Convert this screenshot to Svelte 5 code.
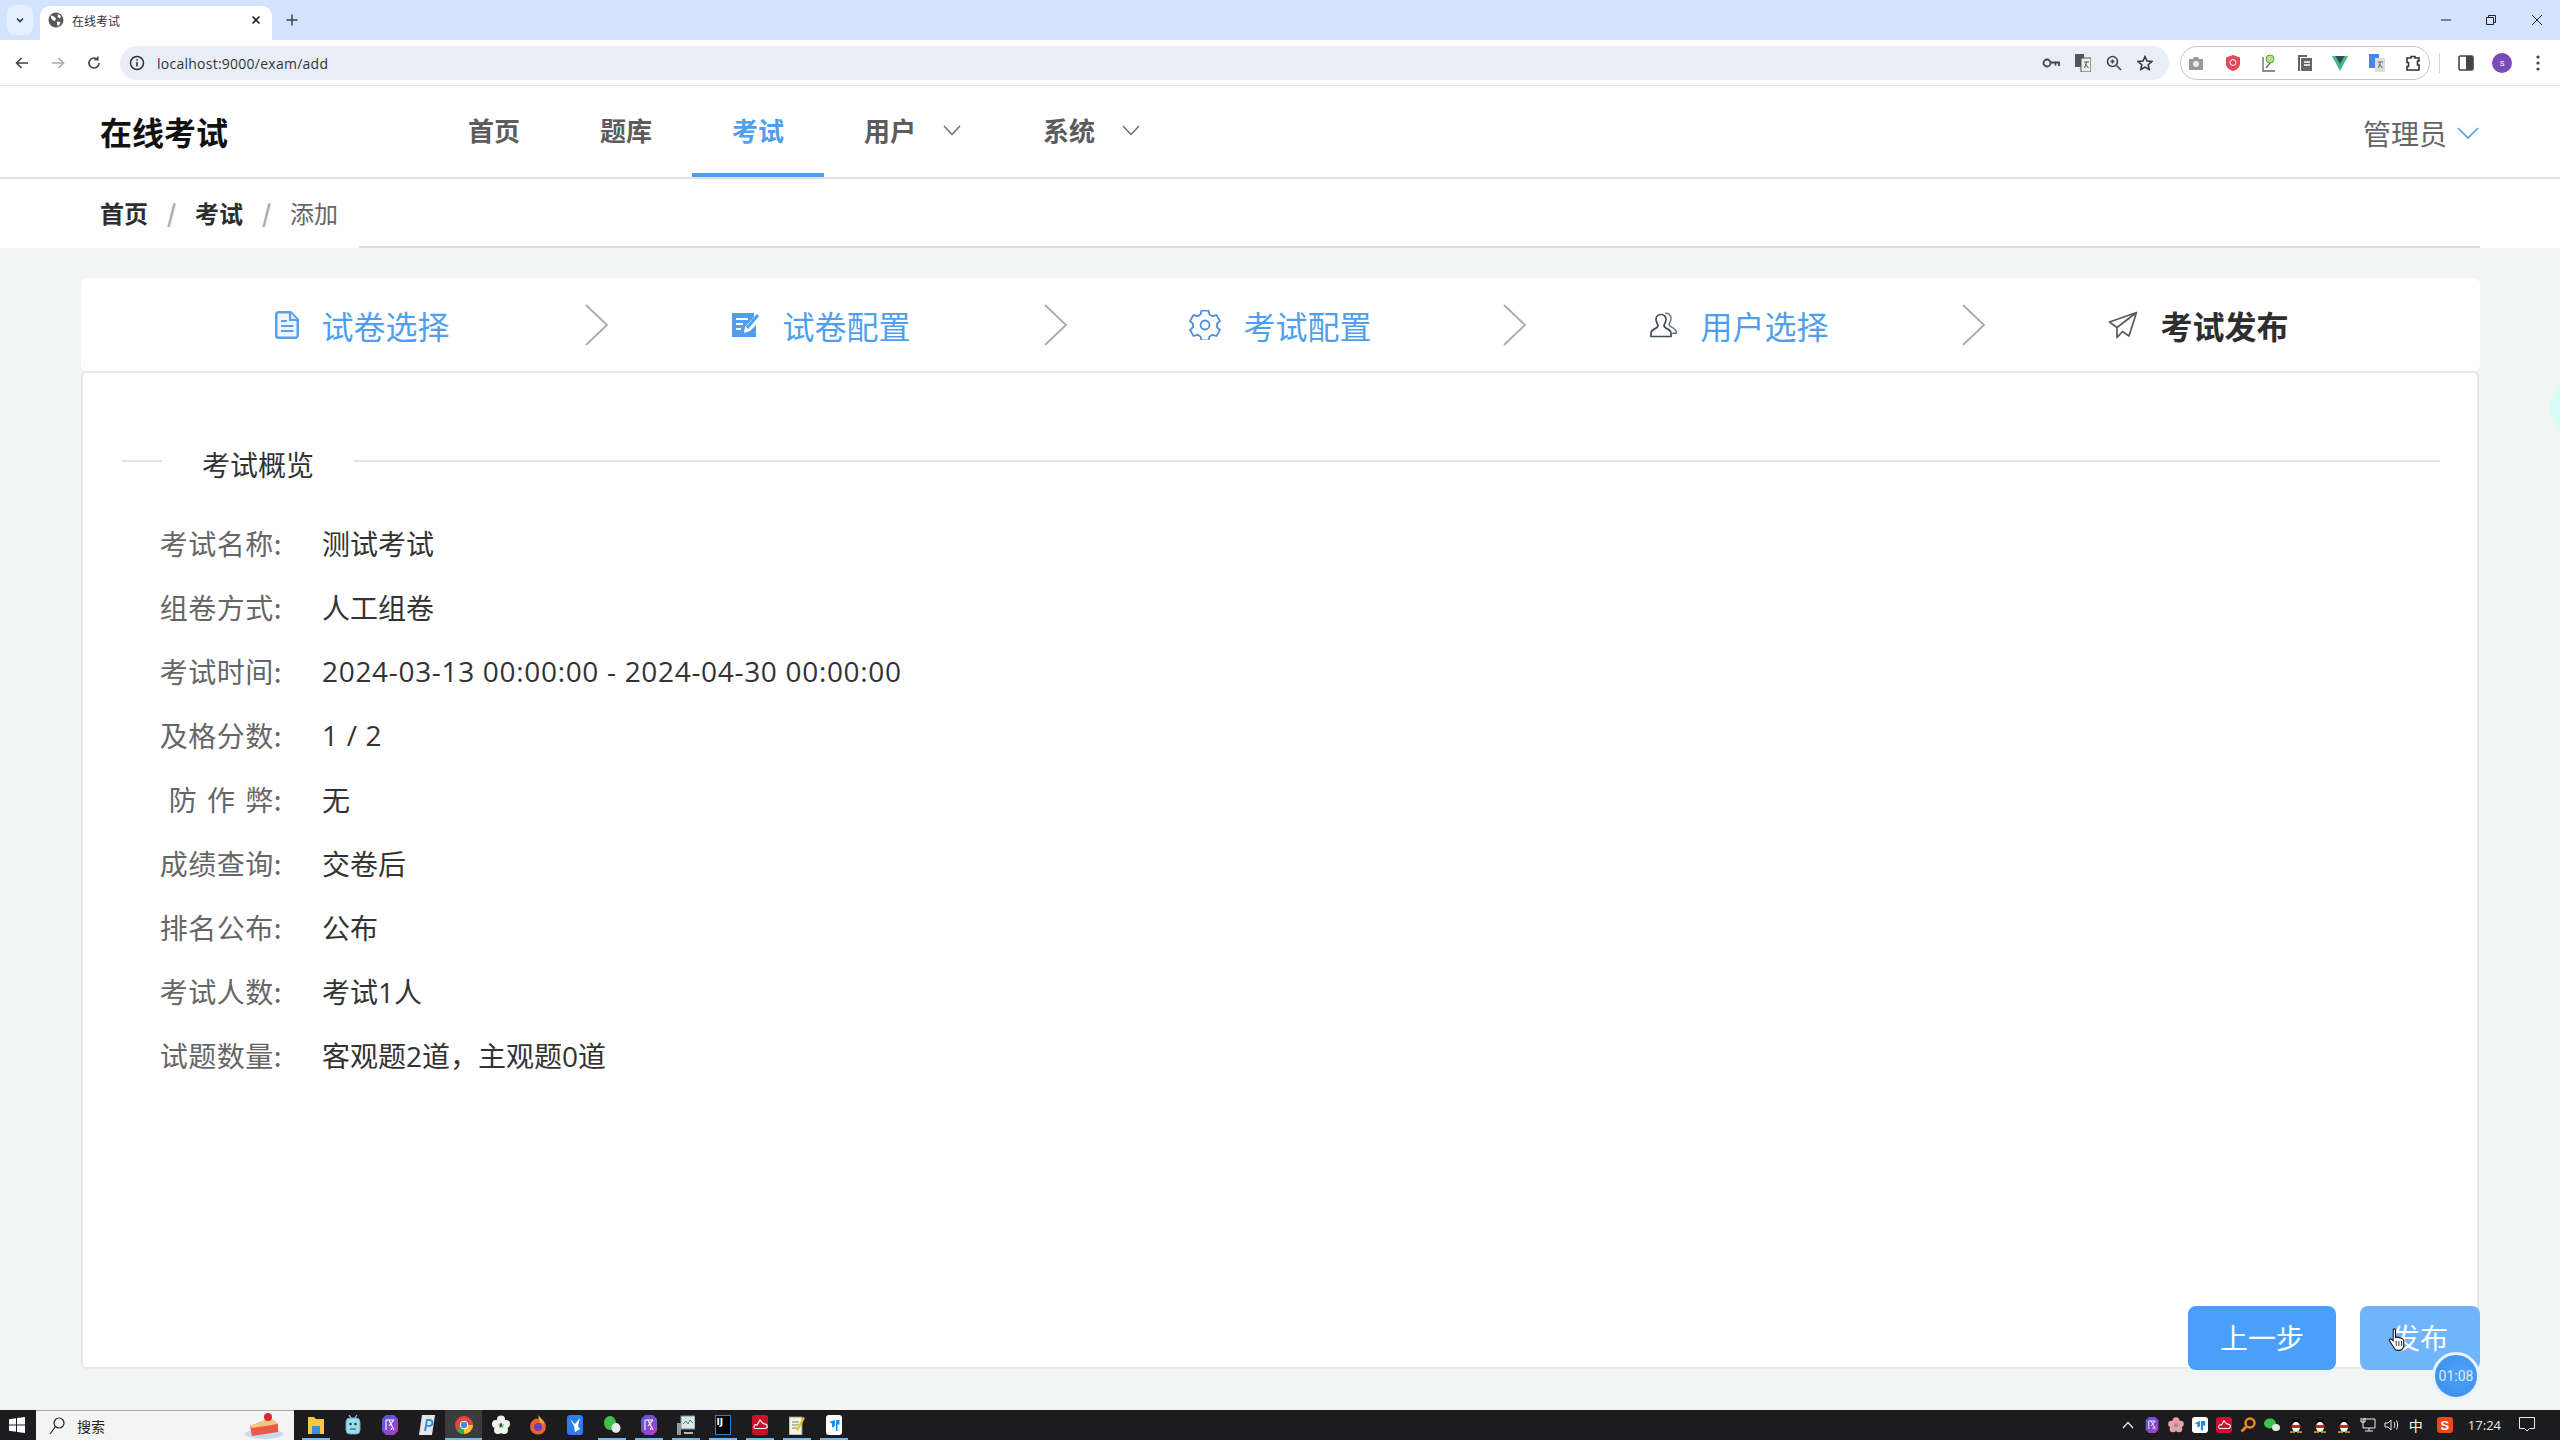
<script>
  const steps = [
    { label: '试卷选择', icon: 'doc' },
    { label: '试卷配置', icon: 'edit' },
    { label: '考试配置', icon: 'gear' },
    { label: '用户选择', icon: 'user' },
    { label: '考试发布', icon: 'send', current: true }
  ];
  const rows = [
    ['考试名称:', '测试考试'],
    ['组卷方式:', '人工组卷'],
    ['考试时间:', '2024-03-13 00:00:00 - 2024-04-30 00:00:00'],
    ['及格分数:', '1 / 2'],
    ['防 作 弊:', '无'],
    ['成绩查询:', '交卷后'],
    ['排名公布:', '公布'],
    ['考试人数:', '考试1人'],
    ['试题数量:', '客观题2道\uFF0C主观题0道']
  ];
  const pinned = [
    { under: true, k: 'folder' },
    { under: false, k: 'robot' },
    { under: false, k: 'hex' },
    { under: false, k: 'p' },
    { under: true, k: 'chrome' },
    { under: false, k: 'flower' },
    { under: false, k: 'fox' },
    { under: false, k: 'bird' },
    { under: true, k: 'chat' },
    { under: true, k: 'hex' },
    { under: true, k: 'mon' },
    { under: true, k: 'ij' },
    { under: true, k: 'cloud' },
    { under: true, k: 'note' },
    { under: true, k: 'tile' }
  ];
</script>

{#snippet hexIcon(w, h)}
  <svg width={w} height={h} viewBox="0 0 16 20">
    <defs><linearGradient id="hexg" x1="0" y1="0" x2="1" y2="1"><stop offset="0" stop-color="#4a5ce0"/><stop offset="1" stop-color="#b83cc0"/></linearGradient></defs>
    <path d="M4 0h8l4 4v12l-4 4H4l-4-4V4z" fill="url(#hexg)"/>
    <path d="M4 5v10M7 5l5 10M12 5L7 11M9.500 13v2M4 5h8" stroke="#fff" stroke-width="1.100" fill="none"/>
  </svg>
{/snippet}

<div class="screen">
  <div class="tabstrip">
    <div class="tabsearch"><svg width="12" height="12" viewBox="0 0 12 12"><path d="M3 4.500l3 3 3-3" fill="none" stroke="#333" stroke-width="1.600"/></svg></div>
    <div class="tab">
      <svg width="16" height="16" viewBox="0 0 16 16"><circle cx="8" cy="8" r="7.500" fill="#55585c"/><path d="M3 3.500l3 1 2 2-1 2.500-2-.5-2-2.500zM10 2l3 2-1 2.500-2.500-1.500zM9 9.500l3.500.5-1.500 4-2-1z" fill="#fff"/></svg>
      <span class="tabtitle">在线考试</span>
      <svg class="tabclose" width="12" height="12" viewBox="0 0 12 12"><path d="M2.500 2.500l7 7M9.500 2.500l-7 7" stroke="#222" stroke-width="1.600"/></svg>
    </div>
    <svg class="newtab" width="14" height="14" viewBox="0 0 14 14"><path d="M7 1.500v11M1.500 7h11" stroke="#444" stroke-width="1.500"/></svg>
    <div class="winctl">
      <svg width="12" height="12" viewBox="0 0 12 12"><path d="M1 6h10" stroke="#222" stroke-width="1"/></svg>
      <svg width="12" height="12" viewBox="0 0 12 12"><path d="M1.500 3.500h7v7h-7zM3.500 3.500v-2h7v7h-2" fill="none" stroke="#222" stroke-width="1"/></svg>
      <svg width="14" height="14" viewBox="0 0 14 14"><path d="M2 2l10 10M12 2L2 12" stroke="#222" stroke-width="1"/></svg>
    </div>
  </div>

  <div class="toolbar">
    <div class="navbtns">
      <svg width="16" height="16" viewBox="0 0 16 16"><path d="M14 8H3M7.500 3L2.500 8l5 5" fill="none" stroke="#444" stroke-width="1.600"/></svg>
      <svg width="16" height="16" viewBox="0 0 16 16"><path d="M2 8h11M8.500 3l5 5-5 5" fill="none" stroke="#aaa" stroke-width="1.600"/></svg>
      <svg width="16" height="16" viewBox="0 0 16 16"><path d="M13 8a5 5 0 1 1-1.500-3.600M11.800 1.500v3.300H8.500" fill="none" stroke="#444" stroke-width="1.600"/></svg>
    </div>
    <div class="omnibox">
      <svg width="16" height="16" viewBox="0 0 16 16"><circle cx="8" cy="8" r="6.500" fill="none" stroke="#333" stroke-width="1.500"/><path d="M8 7v4.500M8 4.200v1.600" stroke="#333" stroke-width="1.600"/></svg>
      <span class="url">localhost:9000/exam/add</span>
      <div class="omniicons">
        <svg width="18" height="14" viewBox="0 0 18 14"><circle cx="5" cy="7" r="3.500" fill="none" stroke="#444" stroke-width="1.800"/><path d="M8.500 6.500H17v3.500M13.500 6.500v3" fill="none" stroke="#444" stroke-width="1.800"/></svg>
        <svg width="16" height="18" viewBox="0 0 16 18"><rect x="0" y="0" width="9" height="13" fill="#555"/><rect x="6" y="4" width="10" height="14" fill="#eee" stroke="#555"/><path d="M9 8h5M11.500 8l-2 6M10.500 10l3 4" stroke="#555" fill="none"/></svg>
        <svg width="16" height="16" viewBox="0 0 16 16"><circle cx="6.500" cy="6.500" r="5" fill="none" stroke="#444" stroke-width="1.600"/><path d="M10.500 10.500L15 15M4.500 6.500h4M6.500 4.500v4" stroke="#444" stroke-width="1.600"/></svg>
        <svg width="16" height="16" viewBox="0 0 16 16"><path d="M8 1.500l2 4.500 4.800.5-3.600 3.200 1 4.800L8 12.100 3.800 14.500l1-4.800L1.200 6.500 6 6z" fill="none" stroke="#333" stroke-width="1.500"/></svg>
      </div>
    </div>
    <div class="extpill">
      <svg width="16" height="16" viewBox="0 0 16 16"><path d="M1 4h4l1-2h4l1 2h4v11H1z" fill="#999"/><circle cx="8" cy="9" r="3" fill="#eee"/></svg>
      <svg width="16" height="18" viewBox="0 0 16 18"><path d="M8 1l7 2.500v6c0 4-3.500 6.500-7 7.500-3.500-1-7-3.500-7-7.500v-6z" fill="#e2475a"/><circle cx="8" cy="8.500" r="3" fill="none" stroke="#fff"/></svg>
      <svg width="16" height="18" viewBox="0 0 16 18"><circle cx="9" cy="5" r="4" fill="#b8e08a" stroke="#58a838"/><path d="M2 3v14h12M5 14l4-5" fill="none" stroke="#666" stroke-width="1.300"/></svg>
      <svg width="14" height="16" viewBox="0 0 14 16"><path d="M0 0h9v2H2v14H0z" fill="#666"/><rect x="3" y="3" width="11" height="13" fill="#666"/><path d="M6 7h6M6 10h6" stroke="#fff" stroke-width="1.300"/></svg>
      <svg width="16" height="16" viewBox="0 0 16 16"><path d="M0 1h16L8 16z" fill="#42b883"/><path d="M3.500 1h9L8 9z" fill="#35495e"/></svg>
      <svg width="16" height="18" viewBox="0 0 16 18"><rect x="0" y="0" width="10" height="14" fill="#4a86e8"/><rect x="6" y="4" width="10" height="14" fill="#ddd"/><path d="M9 8h5M11.500 8l-2 6M10.500 10l3 4" stroke="#666" fill="none"/></svg>
      <svg width="16" height="16" viewBox="0 0 16 16"><path d="M2 3h4V1.500h4V3h4v3h-1.500v4H14v5H2v-3.500h1.500v-4H2z" fill="none" stroke="#333" stroke-width="1.600"/></svg>
    </div>
    <span class="tooldiv"></span>
    <svg class="sidepanel" width="16" height="16" viewBox="0 0 16 16"><rect x="1" y="1" width="14" height="14" rx="1.500" fill="none" stroke="#444" stroke-width="1.600"/><rect x="8" y="1" width="7" height="14" fill="#444"/></svg>
    <span class="avatar">S</span>
    <svg class="dots" width="4" height="16" viewBox="0 0 4 16"><circle cx="2" cy="2" r="1.600" fill="#444"/><circle cx="2" cy="8" r="1.600" fill="#444"/><circle cx="2" cy="14" r="1.600" fill="#444"/></svg>
  </div>

  <header class="topnav">
    <div class="brand">在线考试</div>
    <nav class="menu">
      <span class="item">首页</span>
      <span class="item">题库</span>
      <span class="item active">考试</span>
      <span class="item sub">用户<svg width="18" height="11" viewBox="0 0 18 11"><path d="M1 1l8 8.500L17 1" fill="none" stroke="#666" stroke-width="1.300"/></svg></span>
      <span class="item sub">系统<svg width="18" height="11" viewBox="0 0 18 11"><path d="M1 1l8 8.500L17 1" fill="none" stroke="#666" stroke-width="1.300"/></svg></span>
    </nav>
    <div class="account">管理员<svg width="22" height="12" viewBox="0 0 22 12"><path d="M1 1l10 10L21 1" fill="none" stroke="#4f9fec" stroke-width="1.600"/></svg></div>
  </header>

  <div class="crumbs">
    <div class="crumbtext">
      <b>首页</b><i>/</i><b>考试</b><i>/</i><span>添加</span>
    </div>
    <div class="crumbline"></div>
  </div>

  <main class="content">
    <section class="steps">
      {#each steps as s, i}
        <div class="step" class:current={s.current}>
          {#if s.icon === 'doc'}
            <svg width="24" height="28" viewBox="0 0 24 28"><path d="M3.500 1.250H15.500L22.750 8.500V24.500a2.250 2.250 0 0 1-2.250 2.250h-17a2.250 2.250 0 0 1-2.250-2.250V3.500a2.250 2.250 0 0 1 2.250-2.250z" fill="#f1f7fe" stroke="#5b9fe8" stroke-width="2.500"/><path d="M15 1.500V9h7.500" fill="#dbe9fa" stroke="#5b9fe8" stroke-width="2"/><path d="M6 10h6M6 15h12.500M6 20h12.500" stroke="#5b9fe8" stroke-width="2.200"/></svg>
          {:else if s.icon === 'edit'}
            <svg width="28" height="26" viewBox="0 0 28 26"><path d="M0 1h22v4l-9 10-1 6 6-2 6-6v12H0z" fill="#4f9fec"/><path d="M4 7h12M4 12h7M4 17h5" stroke="#fff" stroke-width="2"/><path d="M15 16L26 3" stroke="#4f9fec" stroke-width="3"/></svg>
          {:else if s.icon === 'gear'}
            <svg width="32" height="30" viewBox="0 0 32 30"><path d="M12.500 1.500h7l1 4 3 1.700 4-1.200 3.500 6-3 2.900v3.200l3 2.900-3.500 6-4-1.200-3 1.700-1 4h-7l-1-4-3-1.700-4 1.200-3.500-6 3-2.900v-3.200l-3-2.900 3.500-6 4 1.200 3-1.700z" fill="none" stroke="#4f8fd8" stroke-width="1.800" transform="translate(0 -1)"/><circle cx="16" cy="15" r="4.500" fill="none" stroke="#4f8fd8" stroke-width="1.800"/></svg>
          {:else if s.icon === 'user'}
            <svg width="28" height="26" viewBox="0 0 28 26"><path d="M11 2.500c-3.500 0-5 2.600-5 5 0 2.500 1.200 4 1.800 5.300.6 1.700-.6 2.800-2.300 3.600-2.800 1.200-4.500 2.300-4.500 5.100v3h20v-3c0-2.800-1.700-3.900-4.500-5.100-1.700-.8-2.900-1.900-2.300-3.600.6-1.300 1.800-2.800 1.800-5.300 0-2.400-1.500-5-5-5z" fill="none" stroke="#3f4c5e" stroke-width="1.700"/><path d="M15 1.500c3-.8 6 1.300 6 5 0 2.500-1.200 4-1.800 5.300-.5 1.500.5 2.500 2.300 3.300 3 1.300 5 2.500 5 5.900l-4.500.5" fill="none" stroke="#6a7686" stroke-width="1.500"/></svg>
          {:else}
            <svg width="30" height="28" viewBox="0 0 30 28"><path d="M28.500 1.500L1.500 11l7.500 5.500V26.500l5.500-6 6.500 4.500zM28.500 1.500L9 16.500" fill="none" stroke="#5a5a5a" stroke-width="1.700" stroke-linejoin="round"/></svg>
          {/if}
          <span>{s.label}</span>
          {#if i < steps.length - 1}
            <svg class="arrow" width="24" height="42" viewBox="0 0 24 42"><path d="M1 1l21 20L1 41" fill="none" stroke="#aaa" stroke-width="1.800"/></svg>
          {/if}
        </div>
      {/each}
    </section>

    <section class="panel">
      <div class="legend"><span class="ln short"></span><span class="ltext">考试概览</span><span class="ln"></span></div>
      <dl class="info">
        {#each rows as r}
          <div class="row"><dt>{r[0]}</dt><dd class:num={/^\d/.test(r[1])}>{r[1]}</dd></div>
        {/each}
      </dl>
      <div class="actions">
        <button class="btn">上一步</button>
        <button class="btn hover">发布</button>
      </div>
      <div class="timer">01:08</div>
      <svg class="cursor" width="18" height="24" viewBox="0 0 24 28" preserveAspectRatio="none"><path d="M7 2c1-1.500 3-1 3 .5V11l2-.5 2 .5 2 .5 2 .5c2 .5 3 1.500 3 3v5c0 3-2 6-5 6h-4c-2 0-3-1-4-3l-6-8c-1-1.500 1-3 2.500-2L7 15z" fill="#fff" stroke="#111" stroke-width="1.400"/><path d="M11 15v6M14.500 15v6M18 15v6" stroke="#111"/></svg>
    </section>
  </main>

  <span class="floatball"></span>

  <footer class="taskbar">
    <svg class="start" width="16" height="16" viewBox="0 0 16 16"><path d="M0 2.200L7 1.200V7.500H0zM8 1L16 0V7.500H8zM0 8.500h7v6.300L0 13.800zM8 8.500h8V16L8 15z" fill="#fff"/></svg>
    <div class="search">
      <svg width="16" height="18" viewBox="0 0 16 18"><circle cx="10" cy="6" r="5" fill="none" stroke="#222" stroke-width="1.200"/><path d="M6.500 9.500L1 17" stroke="#222" stroke-width="1.200"/></svg>
      <span>搜索</span>
      <svg class="pie" width="40" height="28" viewBox="0 0 40 28"><ellipse cx="20" cy="22" rx="19" ry="5" fill="#c8d8f0"/><path d="M6 14L26 6l8 6v8L8 24z" fill="#e85a4a"/><path d="M6 14l20-8 8 6-26 4z" fill="#f4c87a"/><circle cx="24" cy="5" r="4" fill="#d8283a"/></svg>
    </div>
    <div class="pinned">
      {#each pinned as p}
        <div class="pin" class:chromeactive={p.k === 'chrome'} class:under={p.under}>
          {#if p.k === 'chrome'}
            <svg width="18" height="18" viewBox="0 0 18 18"><circle cx="9" cy="9" r="9" fill="#e0483e"/><path d="M9 9L1.200 13.500A9 9 0 0 0 9 18z" fill="#36a852"/><path d="M9 9l0 9A9 9 0 0 0 18 9z" fill="#fbc02d"/><circle cx="9" cy="9" r="4.200" fill="#fff"/><circle cx="9" cy="9" r="3.200" fill="#4a86e8"/></svg>
          {:else if p.k === 'ij'}
            <span class="ij">IJ</span>
          {:else if p.k === 'folder'}
            <svg width="16" height="18" viewBox="0 0 16 18"><path d="M0 1h6l2 2h8v15H0z" fill="#f6c644"/><rect x="4" y="10" width="8" height="8" fill="#3f8fcf"/></svg>
          {:else if p.k === 'chat'}
            <svg width="18" height="18" viewBox="0 0 18 18"><ellipse cx="7" cy="7" rx="6" ry="7" fill="#3fc24a"/><ellipse cx="13" cy="12" rx="4.500" ry="5" fill="#e8e8e8"/></svg>
          {:else if p.k === 'hex'}
            {@render hexIcon(16, 20)}
          {:else if p.k === 'robot'}
            <svg width="16" height="20" viewBox="0 0 16 20"><path d="M4 0l2 3M12 0l-2 3" stroke="#8fd8e8" stroke-width="1.200"/><rect x="1" y="3" width="14" height="16" rx="4" fill="#9fdcec" stroke="#5fb0c8"/><circle cx="5.500" cy="9" r="1.300" fill="#1a4a5a"/><circle cx="10.500" cy="9" r="1.300" fill="#1a4a5a"/><path d="M5 14h6" stroke="#1a4a5a"/></svg>
          {:else if p.k === 'p'}
            <svg width="16" height="20" viewBox="0 0 16 20"><path d="M3 0h13l-3 20H0z" fill="#e4e6e8"/><path d="M6 16l2-11h2.500a2.800 2.800 0 0 1 0 5.800H7.500" fill="none" stroke="#2a90e0" stroke-width="1.800"/></svg>
          {:else if p.k === 'flower'}
            <svg width="18" height="20" viewBox="0 0 18 20"><circle cx="9" cy="4.500" r="4" fill="#f2f2ec"/><circle cx="4" cy="9" r="4" fill="#f2f2ec"/><circle cx="14" cy="9" r="4" fill="#f2f2ec"/><circle cx="6" cy="15" r="4" fill="#f2f2ec"/><circle cx="12" cy="15" r="4" fill="#f2f2ec"/><text x="9" y="13" text-anchor="middle" font-size="7" fill="#3a9a5a" font-family="Liberation Sans">w</text></svg>
          {:else if p.k === 'fox'}
            <svg width="16" height="20" viewBox="0 0 16 20"><circle cx="8" cy="11.500" r="8" fill="#f0622c"/><path d="M8 0c3 3 6 6 6 9l-4-2z" fill="#fbb040"/><circle cx="8" cy="12" r="4" fill="#6a3ec0"/></svg>
          {:else if p.k === 'bird'}
            <svg width="16" height="20" viewBox="0 0 16 20"><rect width="16" height="20" rx="3" fill="#2f7de8"/><path d="M3 4l5 5 5-6-2 8 2 3-5 3-1-6z" fill="#fff"/></svg>
          {:else if p.k === 'mon'}
            <svg width="18" height="20" viewBox="0 0 18 20"><rect x="4" y="1" width="14" height="13" fill="#dfe6e8" stroke="#7f8f90"/><path d="M6 9l3-3 2 3 2-4 3 3" fill="none" stroke="#3a8a7a"/><rect x="0" y="8" width="4" height="12" fill="#8f9a9c"/><path d="M7 18h9" stroke="#b0b8ba" stroke-width="2"/></svg>
          {:else if p.k === 'cloud'}
            <svg width="16" height="20" viewBox="0 0 16 20"><rect width="16" height="20" rx="2" fill="#c8102e"/><path d="M3 13.500h10a2.200 2.200 0 0 0 0-4.400c-.6-1-1.400-.6-2-.4L8 5 5 10a2 2 0 0 0-2 3.500z" fill="none" stroke="#fff" stroke-width="1.100"/></svg>
          {:else if p.k === 'note'}
            <svg width="16" height="20" viewBox="0 0 16 20"><rect x="0" y="2" width="13" height="18" fill="#f4f4ea" stroke="#8a8a7a"/><path d="M3 7h7M3 10h7M3 13h5" stroke="#7a8a5a"/><path d="M7 15L14 2l2 1-7 13z" fill="#e8c020"/></svg>
          {:else}
            <svg width="16" height="20" viewBox="0 0 16 20"><rect width="16" height="20" rx="3" fill="#fff"/><path d="M3 7l6-2v6l-3 1.500V8.500zM10 5h3.500v4.500H11.500V16H10z" fill="#1a8fe0"/></svg>
          {/if}
        </div>
      {/each}
    </div>
    <div class="tray">
      <svg class="tc" width="12" height="8" viewBox="0 0 12 8"><path d="M1 7l5-5.500L11 7" fill="none" stroke="#eee" stroke-width="1.200"/></svg>
      <span class="ts">{@render hexIcon(16, 16)}</span>
      <svg class="ts" width="16" height="16" viewBox="0 0 16 16"><circle cx="8" cy="3.800" r="3.500" fill="#e8a0a8"/><circle cx="3.500" cy="7" r="3.300" fill="#e8a0a8"/><circle cx="12.500" cy="7" r="3.300" fill="#e8a0a8"/><circle cx="5" cy="12" r="3.300" fill="#e8a0a8"/><circle cx="11" cy="12" r="3.300" fill="#e8a0a8"/><circle cx="8" cy="8" r="2" fill="#8a9ab0"/></svg>
      <span class="ti" style:background="#fff"><svg width="14" height="14" viewBox="0 0 16 16"><path d="M2 6l6-2.500v6L5 11V7zM9 3.500h5v5h-2.500V14H9z" fill="#1a8fe0"/></svg></span>
      <span class="ti" style:background="#c8102e"><svg width="14" height="12" viewBox="0 0 16 14"><path d="M3 11h10a2.400 2.400 0 0 0 0-4.800c-.6-1-1.400-.6-2-.4L8 2 5 7a2 2 0 0 0-2 4z" fill="none" stroke="#fff" stroke-width="1.200"/></svg></span>
      <svg class="ts" width="16" height="16" viewBox="0 0 16 16"><circle cx="10" cy="6" r="4.500" fill="none" stroke="#f08a1c" stroke-width="2.400"/><path d="M6.500 9.500L1.500 14.500" stroke="#f08a1c" stroke-width="2.600"/></svg>
      <svg class="ts" width="16" height="14" viewBox="0 0 16 14"><ellipse cx="6" cy="5.500" rx="6" ry="5" fill="#3fc24a"/><ellipse cx="12" cy="9.500" rx="4" ry="3.500" fill="#e8e8e8"/></svg>
      {#each [1, 2, 3] as q}
        <svg class="ts" width="14" height="16" viewBox="0 0 14 16"><ellipse cx="7" cy="8" rx="5.500" ry="7" fill="#111"/><ellipse cx="7" cy="10" rx="4" ry="5" fill="#fff"/><path d="M2 8h10l-1 3H3z" fill="#d8201e"/><path d="M1 15h5M8 15h5" stroke="#f0a020" stroke-width="1.600"/></svg>
      {/each}
      <svg class="ts" width="16" height="14" viewBox="0 0 16 14"><path d="M3 1h12v9H3zM1 0h4v4H1zM9 10v3M5 13h8" fill="none" stroke="#eee"/></svg>
      <svg class="vol" width="16" height="14" viewBox="0 0 16 14"><path d="M1 5h3l3-3v10L4 9H1zM10 4c1 2 1 4 0 6M12.500 2.500c1.500 3 1.500 6 0 9" fill="none" stroke="#eee"/></svg>
      <span class="ime">中</span>
      <span class="ti s">S</span>
      <span class="clock">17:24</span>
      <svg width="16" height="16" viewBox="0 0 16 16"><path d="M.5 .5h15v11h-5L8 14l-2.500-2.500h-5z" fill="none" stroke="#eee"/></svg>
    </div>
  </footer>
</div>

<style>
  :global(body) { margin: 0; background: #f2f4f4; }
  .screen {
    width: 2560px; height: 1440px; position: relative; overflow: hidden;
    display: flex; flex-direction: column;
    font-family: "Noto Sans CJK SC", "Noto Sans", sans-serif;
    background: #f2f4f4;
  }
  .tabstrip { height: 40px; background: #d3e3fd; display: flex; align-items: flex-end; flex: none; position: relative; }
  .tabsearch { width: 26px; height: 30px; margin: 0 8px 5px 7px; background: #e6efff; border-radius: 8px; display: flex; align-items: center; justify-content: center; }
  .tab { width: 232px; height: 34px; margin-left: -1px; background: #fff; border-radius: 10px 10px 0 0; display: flex; align-items: center; padding: 0 10px 6px 8px; box-sizing: border-box; }
  .tabtitle { font-size: 12px; color: #333; margin-left: 8px; flex: 1; }
  .newtab { margin: 0 0 13px 13px; }
  .winctl { margin-left: auto; height: 40px; display: flex; align-items: center; gap: 33px; padding: 0 16px 0 0; }
  .toolbar { height: 46px; background: #fff; border-bottom: 1px solid #e2e4e6; box-sizing: border-box; display: flex; align-items: flex-start; flex: none; padding-top: 6px; }
  .navbtns { width: 120px; height: 34px; display: flex; align-items: center; justify-content: space-between; padding: 0 18px 0 14px; box-sizing: border-box; }
  .omnibox { width: 2049px; height: 34px; background: #e9eef6; border-radius: 17px; display: flex; align-items: center; padding-left: 9px; box-sizing: border-box; }
  .url { font-family: "Open Sans", sans-serif; font-size: 14px; color: #333; margin-left: 12px; letter-spacing: 0.25px; }
  .omniicons { margin-left: auto; display: flex; align-items: center; gap: 15px; padding-right: 16px; }
  .extpill { width: 250px; height: 34px; margin-left: 11px; border: 1px solid #c4c7cc; border-radius: 17px; box-sizing: border-box; display: flex; align-items: center; justify-content: space-between; padding: 0 8px 0 7px; }
  .tooldiv { width: 1px; height: 20px; background: #c8d4e8; margin: 7px 18px 0 9px; }
  .sidepanel { margin-top: 9px; }
  .avatar { width: 20px; height: 20px; border-radius: 50%; background: #7a4ab8; color: #fff; font-size: 8px; display: flex; align-items: center; justify-content: center; margin: 7px 0 0 18px; font-family: Roboto, sans-serif; }
  .dots { margin: 9px 0 0 24px; }

  .topnav { height: 93px; background: #fff; border-bottom: 2px solid #dfe1e3; box-sizing: border-box; display: flex; flex: none; padding: 0 81px 0 100px; position: relative; }
  .brand { width: 328px; font-size: 32px; font-weight: 700; color: #111; line-height: 91px; box-sizing: border-box; }
  .menu { display: flex; }
  .item { padding: 0 40px; font-size: 26px; font-weight: 700; color: #5c5c5c; line-height: 88px; height: 91px; box-sizing: border-box; }
  .item.active { color: #4f9fec; border-bottom: 4px solid #4f9fec; }
  .item.sub { display: flex; align-items: center; padding-right: 42px; gap: 27px; height: 88px; }
  .account { margin-left: auto; display: flex; align-items: center; gap: 10px; font-size: 28px; color: #666; padding-top: 2px; }

  .crumbs { height: 69px; background: #fff; flex: none; display: flex; padding-left: 100px; padding-right: 80px; box-sizing: border-box; position: relative; }
  .crumbtext { display: flex; align-items: center; font-size: 24px; color: #666; height: 69px; width: 259px; flex: none; margin-top: -1px; }
  .crumbtext b { font-weight: 700; color: #2e2e2e; }
  .crumbtext i { font-style: normal; font-weight: 700; color: #a8acb2; margin: 0 19px; width: 9px; }
  .crumbline { flex: 1; height: 2px; background: #dcdfe1; align-self: flex-end; margin-bottom: 0; }

  .content { flex: 1; display: flex; flex-direction: column; padding: 30px 80px 41px 81px; min-height: 0; }
  .steps { height: 93px; background: #fff; border-radius: 6px; display: grid; grid-template-columns: repeat(5, 459px); justify-content: center; flex: none; }
  .step { display: flex; align-items: center; justify-content: center; gap: 22px; font-size: 32px; color: #4f9fec; position: relative; }
  .step svg:first-child { flex: none; }
  .step span { line-height: 1; }
  .step.current { color: #2e2e2e; font-weight: 700; }
  .arrow { position: absolute; right: -17px; top: 26px; }

  .panel { flex: 1; background: #fff; border: 2px solid #e6e7e8; margin-right: 1px; border-radius: 6px; box-sizing: border-box; display: flex; flex-direction: column; position: relative; padding: 0 0 0 38px; }
  .legend { display: flex; align-items: center; font-size: 28px; color: #333; margin: 71px 37px 0 1px; height: 40px; }
  .ln { flex: 1; height: 2px; background: #e2e3e4; margin-top: -6px; }
  .ln.short { flex: none; width: 40px; }
  .ltext { padding: 0 40px; line-height: 40px; }
  .info { margin: 27px 0 0 0; padding: 0; }
  .row { display: flex; height: 64px; align-items: center; font-size: 28px; }
  .row dt { width: 201px; text-align: right; padding-right: 40px; box-sizing: border-box; color: #666; white-space: pre; letter-spacing: 0.5px; word-spacing: 3px; }
  .row dd { margin: 0; color: #333; font-family: "Open Sans", "Noto Sans CJK SC", sans-serif; }
  .row dd.num { letter-spacing: 0.68px; }
  .actions { margin-top: auto; display: flex; justify-content: flex-end; gap: 24px; margin-bottom: -3px; margin-right: -3px; }
  .btn { height: 64px; padding: 0 32px 3px; border: 0; border-radius: 8px; background: #4a9ffa; color: #fff; font: inherit; font-size: 28px; box-sizing: border-box; }
  .btn.hover { background: #70b4fb; }
  .timer { position: absolute; right: -3px; bottom: -33px; width: 48px; height: 48px; box-sizing: border-box; border-radius: 50%; border: 3px solid #e8f2fb; background: radial-gradient(circle at 60% 45%, #4da3f8 0%, #3f92f0 70%, #7ac4fa 100%); color: #dcecff; font-family: Roboto, sans-serif; font-size: 14px; display: flex; align-items: center; justify-content: center; }
  .cursor { position: absolute; right: 71px; bottom: 15px; }
  .floatball { position: absolute; left: 2550px; top: 381px; width: 54px; height: 54px; border-radius: 50%; background: #d4fdf6; }

  .taskbar { height: 30px; background: #1c1c1e; display: flex; align-items: center; flex: none; position: relative; }
  .start { margin: 0 11px 0 9px; flex: none; }
  .search { width: 258px; height: 30px; background: #f4f4f4; box-sizing: border-box; border-top: 1px solid #aaa; display: flex; align-items: center; padding-left: 13px; gap: 12px; font-size: 14px; color: #222; flex: none; position: relative; }
  .pie { margin-left: auto; margin-right: 10px; }
  .pinned { display: flex; margin-left: 3px; height: 30px; }
  .pin { width: 37px; height: 30px; display: flex; align-items: center; justify-content: center; box-sizing: border-box; }
  .pin.under { background: linear-gradient(#76b9ed, #76b9ed) center bottom / 28px 2px no-repeat; }
  .pin.chromeactive { background: linear-gradient(#76b9ed, #76b9ed) center bottom / 100% 2px no-repeat, #3c3c3e; }
  .ij { width: 16px; height: 20px; background: #000; border: 1px solid #2a7fd0; color: #fff; font-family: "DejaVu Sans", sans-serif; font-size: 9px; font-weight: 700; box-sizing: border-box; text-align: left; padding-left: 1px; line-height: 12px; }
  .tray { margin-left: auto; display: flex; align-items: center; height: 30px; color: #eee; position: relative; padding-right: 25px; }
  .tray > * { flex: none; }
  .tc { margin-right: 10px; }
  .ts, .ti { width: 16px; margin-right: 8px; }
  .ts { display: flex; align-items: center; justify-content: center; }
  .ti { height: 16px; border-radius: 3px; display: flex; align-items: center; justify-content: center; }
  .vol { margin-right: 8px; }
  .ti.s { background: #e8481c; color: #fff; font-weight: 700; font-size: 13px; font-family: "Liberation Sans", sans-serif; margin-right: 15px; margin-left: 13px; }
  .ime { font-size: 14px; width: 16px; text-align: center; color: #fff; }
  .clock { font-family: "Open Sans", sans-serif; font-size: 13px; margin-right: 18px; }
</style>
